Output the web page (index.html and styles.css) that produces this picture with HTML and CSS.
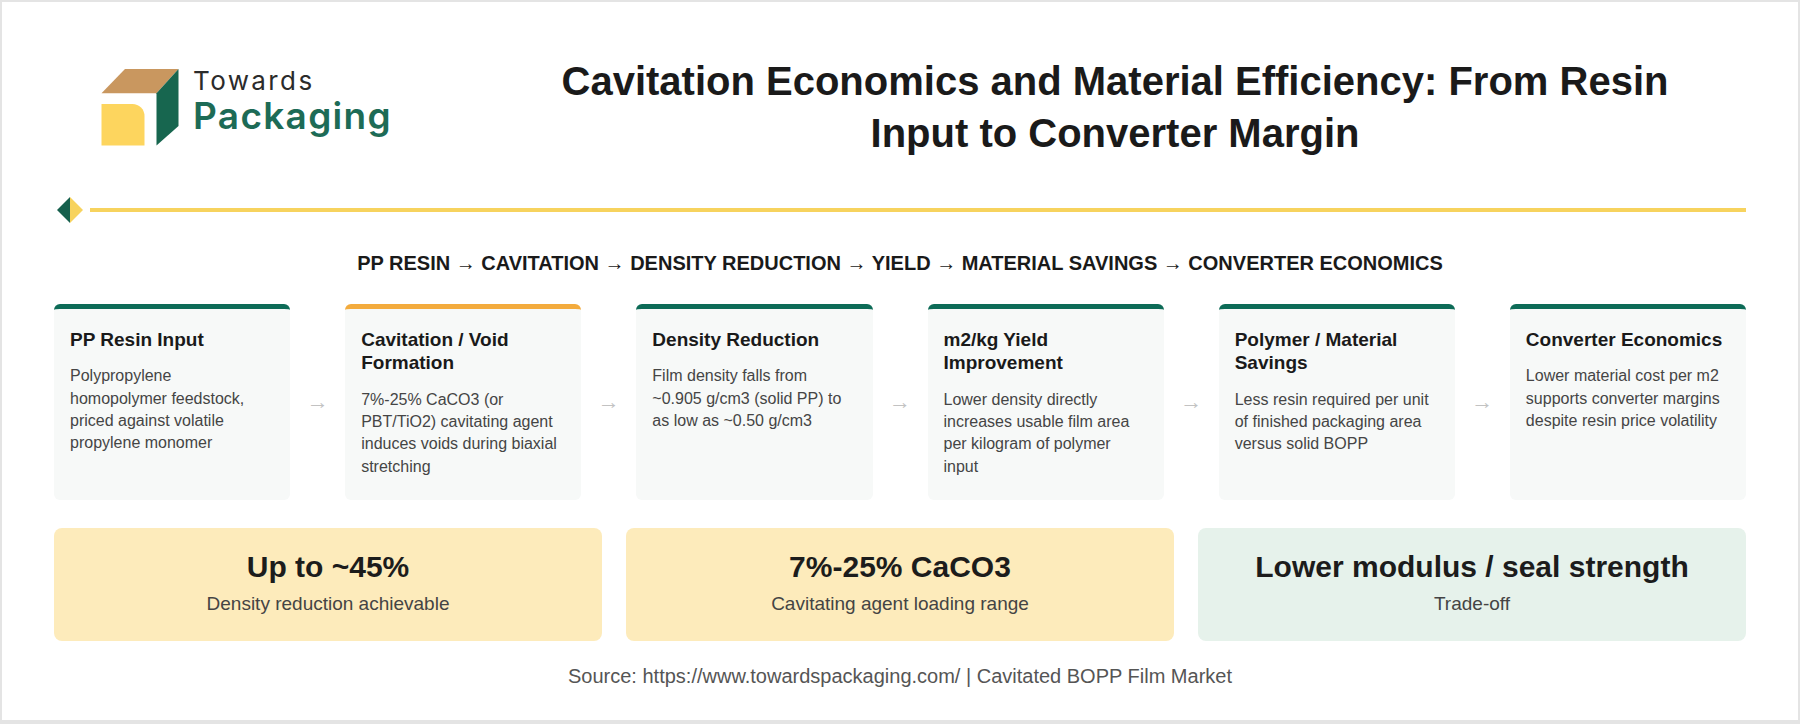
FILE: index.html
```html
<!DOCTYPE html>
<html lang="en">
<head>
<meta charset="utf-8">
<title>Cavitation Economics and Material Efficiency</title>
<link rel="stylesheet" href="styles.css">
</head>
<body>
<div class="frame">
  <header class="header">
    <div class="logo">
      <svg class="logo-mark" width="78" height="77" viewBox="0 0 78 77">
        <polygon points="0.5,24.3 24,0 77.5,0 55.5,24.3" fill="#c9975f"/>
        <polygon points="55.5,24.3 77.5,0 77.5,57 55.5,76.5" fill="#17664f"/>
        <path d="M0.5 35 H31.5 A12 12 0 0 1 43.5 47 V76.5 H0.5 Z" fill="#fdd55e"/>
      </svg>
      <div class="logo-text">
        <span class="logo-top">Towards</span>
        <span class="logo-bottom">Packaging</span>
      </div>
    </div>
    <div class="title-wrap">
      <h1 class="title">Cavitation Economics and Material Efficiency: From Resin Input to Converter Margin</h1>
    </div>
  </header>

  <div class="divider">
    <svg class="diamond" width="26" height="26" viewBox="0 0 26 26">
      <polygon points="13,0 0,13 13,26" fill="#16604d"/>
      <polygon points="13,0 26,13 13,26" fill="#f7d35e"/>
    </svg>
    <div class="divider-line"></div>
  </div>

  <p class="flow">PP RESIN → CAVITATION → DENSITY REDUCTION → YIELD → MATERIAL SAVINGS → CONVERTER ECONOMICS</p>

  <div class="cards">
    <div class="card">
      <h3 class="card-title">PP Resin Input</h3>
      <p class="card-text">Polypropylene homopolymer feedstock, priced against volatile propylene monomer</p>
    </div>
    <div class="arrow">→</div>
    <div class="card card-accent">
      <h3 class="card-title">Cavitation / Void Formation</h3>
      <p class="card-text">7%-25% CaCO3 (or PBT/TiO2) cavitating agent induces voids during biaxial stretching</p>
    </div>
    <div class="arrow">→</div>
    <div class="card">
      <h3 class="card-title">Density Reduction</h3>
      <p class="card-text">Film density falls from ~0.905 g/cm3 (solid PP) to as low as ~0.50 g/cm3</p>
    </div>
    <div class="arrow">→</div>
    <div class="card">
      <h3 class="card-title">m2/kg Yield Improvement</h3>
      <p class="card-text">Lower density directly increases usable film area per kilogram of polymer input</p>
    </div>
    <div class="arrow">→</div>
    <div class="card">
      <h3 class="card-title">Polymer / Material Savings</h3>
      <p class="card-text">Less resin required per unit of finished packaging area versus solid BOPP</p>
    </div>
    <div class="arrow">→</div>
    <div class="card">
      <h3 class="card-title">Converter Economics</h3>
      <p class="card-text">Lower material cost per m2 supports converter margins despite resin price volatility</p>
    </div>
  </div>

  <div class="stats">
    <div class="stat stat-yellow">
      <div class="stat-value">Up to ~45%</div>
      <div class="stat-label">Density reduction achievable</div>
    </div>
    <div class="stat stat-yellow">
      <div class="stat-value">7%-25% CaCO3</div>
      <div class="stat-label">Cavitating agent loading range</div>
    </div>
    <div class="stat stat-green">
      <div class="stat-value">Lower modulus / seal strength</div>
      <div class="stat-label">Trade-off</div>
    </div>
  </div>

  <p class="source">Source: https://www.towardspackaging.com/ | Cavitated BOPP Film Market</p>
</div>
</body>
</html>
```

FILE: styles.css
```css
* {
  box-sizing: border-box;
}

html, body {
  margin: 0;
  padding: 0;
}

body {
  background: #e4e4e4;
  width: 1800px;
  height: 724px;
  overflow: hidden;
  font-family: "Liberation Sans", Arial, sans-serif;
  color: #1a1a1a;
}

.frame {
  margin: 2px;
  width: 1796px;
  height: 718px;
  background: #ffffff;
  padding: 53px 52px 0 52px;
}

/* Header */
.header {
  display: flex;
  align-items: flex-start;
}

.logo {
  width: 430px;
  flex: none;
  display: flex;
  align-items: flex-start;
  padding-left: 47px;
  margin-top: 9px;
}

.logo-mark {
  display: block;
  margin-top: 5px;
  flex: none;
}

.logo-text {
  display: flex;
  flex-direction: column;
  margin-left: 14px;
  margin-top: 2px;
  font-family: Inter, "Noto Sans", sans-serif;
}

.logo-top {
  font-size: 26px;
  line-height: 30px;
  font-weight: 400;
  color: #2b2b2b;
  letter-spacing: 2.4px;
}

.logo-bottom {
  font-size: 37px;
  line-height: 40px;
  font-weight: 600;
  color: #1d6b56;
  letter-spacing: 1.3px;
}

.title-wrap {
  flex: 1;
  display: flex;
  justify-content: center;
}

.title {
  margin: 0;
  max-width: 1180px;
  text-align: center;
  font-size: 40px;
  line-height: 52px;
  font-weight: 700;
  color: #1a1a1a;
}

/* Divider */
.divider {
  display: flex;
  align-items: center;
  margin-top: 38px;
  height: 26px;
}

.diamond {
  display: block;
  flex: none;
  margin-left: 3px;
}

.divider-line {
  flex: 1;
  height: 4px;
  margin-left: 7px;
  background: #f7d35e;
}

/* Flow */
.flow {
  margin: 28px 0 0 0;
  text-align: center;
  font-size: 20px;
  line-height: 24.7px;
  font-weight: 700;
  color: #1a1a1a;
}

/* Cards */
.cards {
  display: flex;
  margin-top: 28px;
  height: 196px;
}

.card {
  flex: 1;
  background: #f7f9f8;
  border-top: 5px solid #0d6b57;
  border-radius: 6px;
  padding: 19px 20px 18px 16px;
}

.card-accent {
  border-top-color: #f3ab3d;
}

.card-title {
  margin: 0 0 14px 0;
  font-size: 19px;
  line-height: 23.4px;
  font-weight: 700;
  color: #1a1a1a;
}

.card-text {
  margin: 0;
  font-size: 16px;
  line-height: 22.4px;
  color: #454545;
}

.arrow {
  flex: none;
  width: 55px;
  display: flex;
  align-items: center;
  justify-content: center;
  font-size: 22px;
  color: #c2c2c2;
}

/* Stats */
.stats {
  display: flex;
  gap: 24px;
  margin-top: 28px;
}

.stat {
  flex: 1;
  border-radius: 8px;
  padding: 22px 20px 24px;
  text-align: center;
}

.stat-yellow {
  background: #fdebbb;
}

.stat-green {
  background: #e6f2eb;
}

.stat-value {
  font-size: 30px;
  line-height: 34.8px;
  font-weight: 700;
  color: #1c1c1c;
  margin-bottom: 6px;
}

.stat-label {
  font-size: 19px;
  line-height: 26.6px;
  color: #444444;
}

/* Source */
.source {
  margin: 22px 0 0 0;
  text-align: center;
  font-size: 20px;
  line-height: 26px;
  color: #555555;
}
```
